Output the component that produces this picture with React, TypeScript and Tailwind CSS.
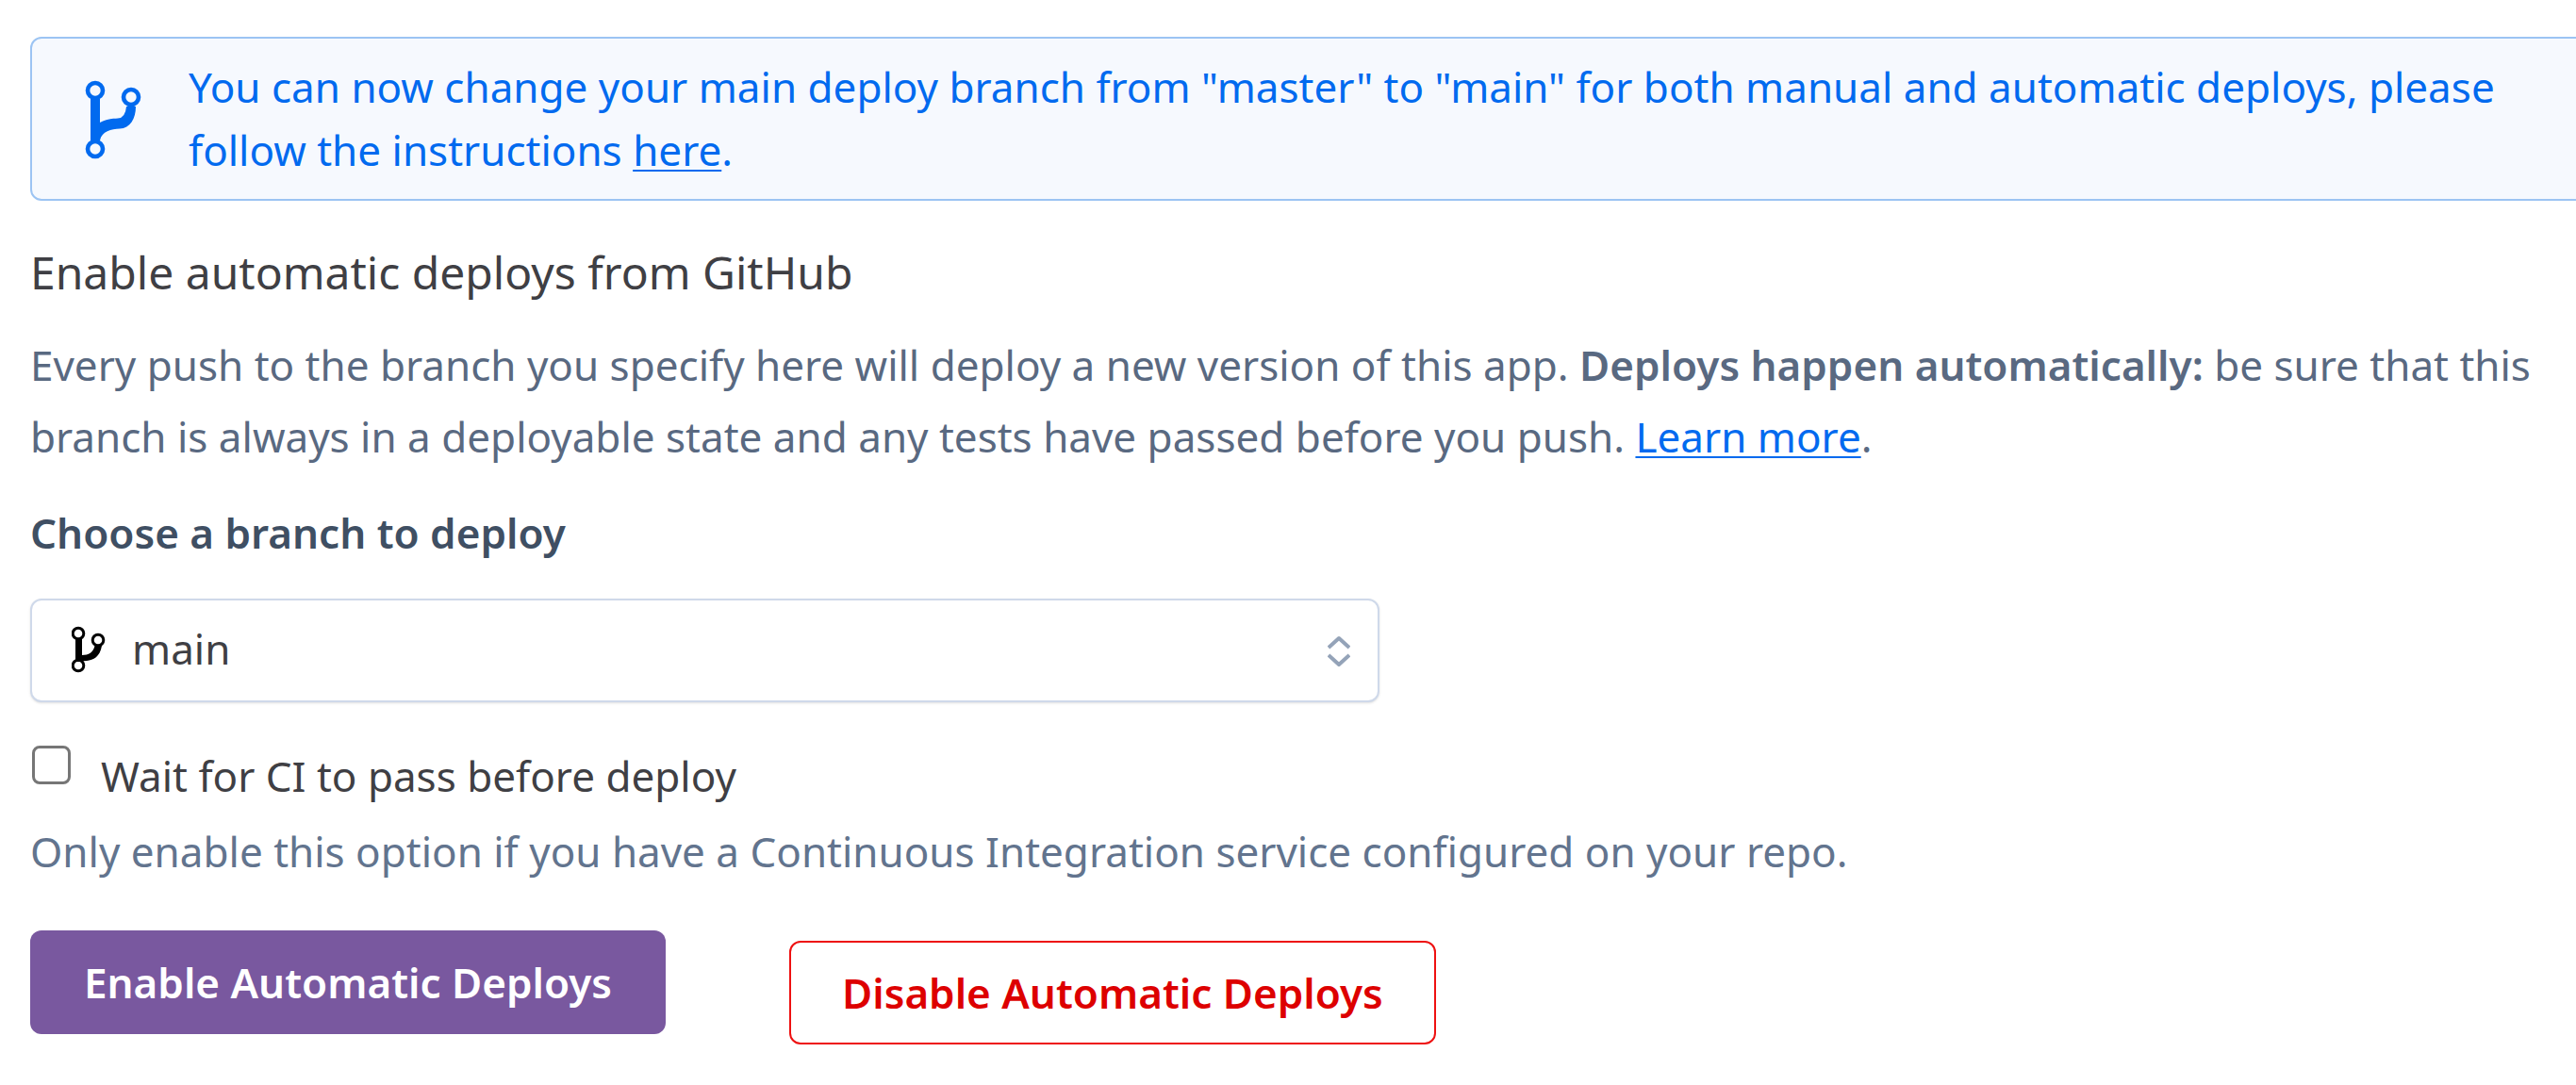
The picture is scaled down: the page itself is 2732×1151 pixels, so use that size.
import React from 'react';

function BranchIcon({ className }: { className: string }) {
  return (
    <svg viewBox="0 0 64 88" className={className} fill="none" stroke="currentColor" aria-hidden="true">
      <circle cx="13" cy="14" r="8" strokeWidth="4.6" />
      <circle cx="51" cy="21" r="8" strokeWidth="4.6" />
      <circle cx="13" cy="76" r="8" strokeWidth="4.6" />
      <path
        d="M8 23H18V48C25 44 31 44 37 43.500Q45 43 46 31H56C56 44 50 54 39 54.500C30 55 20 57 18 67H8Z"
        fill="currentColor"
        stroke="none"
      />
    </svg>
  );
}

function SmallBranchIcon({ className }: { className: string }) {
  return (
    <svg viewBox="0 0 36 50" className={className} fill="none" stroke="currentColor" aria-hidden="true">
      <circle cx="7" cy="8" r="5.8" strokeWidth="3" />
      <circle cx="28" cy="15" r="5.8" strokeWidth="3" />
      <circle cx="7" cy="42" r="5.8" strokeWidth="3" />
      <path d="M4 13H11V31C18 31 23 28 24.500 21H32C30 33 23 36 16 37Q12 37 10 38H4Z" fill="currentColor" stroke="none" />
    </svg>
  );
}

function SortIcon({ className }: { className: string }) {
  return (
    <svg viewBox="0 0 24 34" className={className} fill="none" stroke="currentColor" strokeWidth="4" strokeLinejoin="round" aria-hidden="true">
      <path d="M1 13L12 3L23 13M1 21L12 31L23 21" />
    </svg>
  );
}

export default function App() {
  return (
    <main className="min-h-screen overflow-hidden bg-white pt-[39px] pb-8 pl-8 font-['Noto_Sans',sans-serif] text-[44px] text-[#596981]">
      <section className="-mr-4 flex items-center rounded-xl border-2 border-[#9cc4f3] bg-[#f6f9fe] py-[18px] pl-[54px] text-[#016aef]">
        <BranchIcon className="h-[88px] w-16 shrink-0" />
        <p className="ml-12 leading-[67px]">
          You can now change your main deploy branch from "master" to "main" for both manual and automatic deploys, please<br />
          follow the instructions{' '}
          <a href="#instructions" className="underline decoration-2 underline-offset-4">here</a>.
        </p>
      </section>
      <h1 className="mt-[38px] text-[48px] leading-[76px] text-[#3f3f44]">Enable automatic deploys from GitHub</h1>
      <p className="mt-[22px] leading-[76px]">
        Every push to the branch you specify here will deploy a new version of this app.{' '}
        <strong className="font-semibold">Deploys happen automatically:</strong> be sure that this<br />
        branch is always in a deployable state and any tests have passed before you push.{' '}
        <a href="#learn-more" className="text-[#016aef] underline decoration-2 underline-offset-4">Learn more</a>.
      </p>
      <form onSubmit={(event) => event.preventDefault()}>
        <label htmlFor="branch" className="mt-[26px] block leading-[76px] font-semibold text-[#3f4f63]">
          Choose a branch to deploy
        </label>
        <div className="relative mt-8 w-[53%] text-[#3f3f44]">
          <SmallBranchIcon className="pointer-events-none absolute top-[29px] left-11 h-[50px] w-9 text-black" />
          <select
            id="branch"
            defaultValue="main"
            className="block h-[110px] w-full appearance-none rounded-xl border-2 border-[#cfd9ea] bg-white pr-20 pb-1 pl-[106px] shadow-sm"
          >
            <option value="main">main</option>
          </select>
          <SortIcon className="pointer-events-none absolute top-[39px] right-[31px] h-[34px] w-6 text-[#94a3b8]" />
        </div>
        <div className="mt-10 flex items-start gap-8">
          <input
            id="wait-for-ci"
            type="checkbox"
            className="mt-1.5 ml-0.5 size-[41px] shrink-0 appearance-none rounded-lg border-3 border-[#767676] bg-white checked:bg-[#79589f]"
          />
          <label htmlFor="wait-for-ci" className="leading-[76px] text-[#3f3f44]">Wait for CI to pass before deploy</label>
        </div>
        <p className="mt-1 leading-[76px] text-[#62748e]">
          Only enable this option if you have a Continuous Integration service configured on your repo.
        </p>
        <div className="mt-[46px] flex items-start gap-[131px] font-semibold">
          <button type="submit" className="h-[110px] rounded-xl bg-[#79589f] px-[57px] text-white">
            Enable Automatic Deploys
          </button>
          <button type="button" className="mt-[11px] h-[110px] rounded-xl border-2 border-[#e11] px-[54px] text-[#dd0000]">
            Disable Automatic Deploys
          </button>
        </div>
      </form>
    </main>
  );
}
